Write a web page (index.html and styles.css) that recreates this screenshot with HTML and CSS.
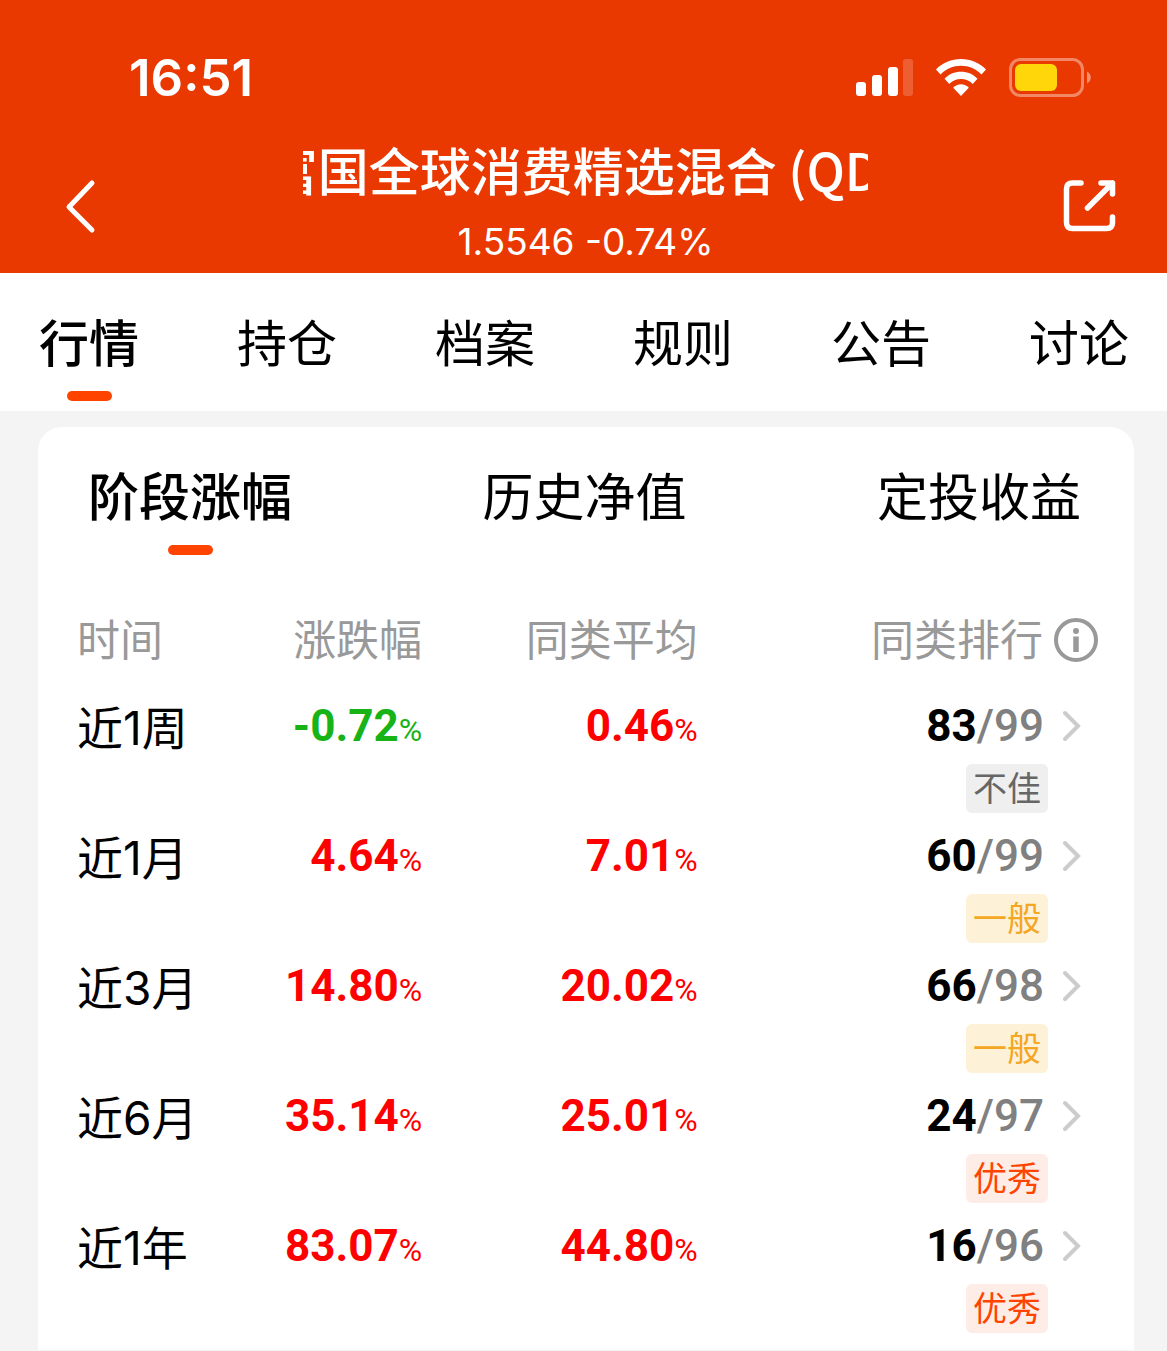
FILE: index.html
```html
<!DOCTYPE html>
<html lang="zh-CN">
<head>
<meta charset="utf-8">
<meta name="viewport" content="width=device-width, initial-scale=1">
<title>富国全球消费精选混合(QDII)</title>
<link rel="stylesheet" href="styles.css">
</head>
<body>
<header class="top">
  <div class="status">
    <time class="clock">16:51</time>
    <div class="status-icons">
      <svg width="58" height="38" viewBox="0 0 58 38" fill="#fff" aria-hidden="true">
        <rect x="1" y="23" width="10" height="14" rx="3"/>
        <rect x="17" y="16" width="10" height="21" rx="3"/>
        <rect x="33" y="8" width="10" height="29" rx="3"/>
        <rect x="48" y="0" width="10" height="37" rx="3" opacity=".2"/>
      </svg>
      <svg width="50" height="38" viewBox="0 0 50 38" fill="#fff" aria-hidden="true">
        <path d="M25 0C34.500 0 43.500 3.800 50 10.500L45.500 15.500C40 10 33 6.800 25 6.800S10 10 4.500 15.500L0 10.500C6.500 3.800 15.500 0 25 0Z"/>
        <path d="M25 12.800C31.500 12.800 37.300 15.400 41.500 19.800L36.700 25C33.600 21.800 29.500 20 25 20S16.400 21.800 13.300 25L8.500 19.800C12.700 15.400 18.500 12.800 25 12.800Z"/>
        <path d="M25 25.300C28 25.300 30.800 26.600 32.800 28.800L25 37L17.200 28.800C19.200 26.600 22 25.300 25 25.300Z"/>
      </svg>
      <svg width="82" height="40" viewBox="0 0 82 40" aria-hidden="true">
        <rect x="1.500" y="1.500" width="72" height="36" rx="10" fill="none" stroke="#fff" stroke-opacity=".4" stroke-width="3"/>
        <rect x="6" y="6" width="42" height="27" rx="6" fill="#ffd60a"/>
        <path d="M78 13.500C83 16 83 23 78 25.500Z" fill="#fff" opacity=".45"/>
      </svg>
    </div>
  </div>
  <div class="nav">
    <button class="icon-btn back" type="button" aria-label="返回">
      <svg width="50" height="56" viewBox="0 0 50 56" fill="none" stroke="#fff" stroke-width="5" stroke-linecap="round" stroke-linejoin="round"><path d="M40 4L17 28L40 51"/></svg>
    </button>
    <div class="fund">
      <h1 class="fund-name">富国全球消费精选混合 (QDII)</h1>
      <p class="fund-value">1.5546 -0.74%</p>
    </div>
    <button class="icon-btn share" type="button" aria-label="分享">
      <svg width="56" height="56" viewBox="0 0 56 56" fill="none" stroke="#fff" stroke-width="5.500" stroke-linecap="round" stroke-linejoin="round"><path d="M18 4H9.500Q3.500 4 3.500 10V43.500Q3.500 49.500 9.500 49.500H43.500Q49.500 49.500 49.500 43.500V38M38 4H49.500V15M49.500 4L24.500 29"/></svg>
    </button>
  </div>
</header>

<nav class="tabs">
  <a class="tab active" href="#quote">行情</a>
  <a class="tab" href="#holdings">持仓</a>
  <a class="tab" href="#profile">档案</a>
  <a class="tab" href="#rules">规则</a>
  <a class="tab" href="#notices">公告</a>
  <a class="tab" href="#discuss">讨论</a>
</nav>

<main class="page" id="quote">
  <section class="card">
    <div class="subtabs">
      <button class="tab active" type="button">阶段涨幅</button>
      <button class="tab" type="button">历史净值</button>
      <button class="tab" type="button">定投收益</button>
    </div>
    <table class="returns">
      <thead>
        <tr>
          <th class="period" scope="col">时间</th>
          <th class="change" scope="col">涨跌幅</th>
          <th class="average" scope="col">同类平均</th>
          <th class="rank" scope="col"><span class="rank-line">同类排行<button class="icon-btn" type="button" aria-label="排行说明"><svg width="44" height="44" viewBox="0 0 44 44" fill="none" stroke="#999"><circle cx="22" cy="22" r="20" stroke-width="4"/><path d="M22 18.500V34" stroke-width="5.500"/><circle cx="22" cy="13" r="3" fill="#999" stroke="none"/></svg></button></span></th>
        </tr>
      </thead>
      <tbody>
        <tr>
          <th class="period" scope="row">近1周</th>
          <td class="num down">-0.72<span class="pct">%</span></td>
          <td class="num up">0.46<span class="pct">%</span></td>
          <td class="rank"><a class="rank-line num" href="#rank-1w"><span>83<span class="total">/99</span></span><svg class="chev" viewBox="0 0 20 32"><path d="M3 3L16 16L3 29"/></svg></a><span class="badge poor">不佳</span></td>
        </tr>
        <tr>
          <th class="period" scope="row">近1月</th>
          <td class="num up">4.64<span class="pct">%</span></td>
          <td class="num up">7.01<span class="pct">%</span></td>
          <td class="rank"><a class="rank-line num" href="#rank-1m"><span>60<span class="total">/99</span></span><svg class="chev" viewBox="0 0 20 32"><path d="M3 3L16 16L3 29"/></svg></a><span class="badge fair">一般</span></td>
        </tr>
        <tr>
          <th class="period" scope="row">近3月</th>
          <td class="num up">14.80<span class="pct">%</span></td>
          <td class="num up">20.02<span class="pct">%</span></td>
          <td class="rank"><a class="rank-line num" href="#rank-3m"><span>66<span class="total">/98</span></span><svg class="chev" viewBox="0 0 20 32"><path d="M3 3L16 16L3 29"/></svg></a><span class="badge fair">一般</span></td>
        </tr>
        <tr>
          <th class="period" scope="row">近6月</th>
          <td class="num up">35.14<span class="pct">%</span></td>
          <td class="num up">25.01<span class="pct">%</span></td>
          <td class="rank"><a class="rank-line num" href="#rank-6m"><span>24<span class="total">/97</span></span><svg class="chev" viewBox="0 0 20 32"><path d="M3 3L16 16L3 29"/></svg></a><span class="badge good">优秀</span></td>
        </tr>
        <tr>
          <th class="period" scope="row">近1年</th>
          <td class="num up">83.07<span class="pct">%</span></td>
          <td class="num up">44.80<span class="pct">%</span></td>
          <td class="rank"><a class="rank-line num" href="#rank-1y"><span>16<span class="total">/96</span></span><svg class="chev" viewBox="0 0 20 32"><path d="M3 3L16 16L3 29"/></svg></a><span class="badge good">优秀</span></td>
        </tr>
      </tbody>
    </table>
  </section>
</main>
</body>
</html>
```
FILE: styles.css
```css
* { box-sizing: border-box; }

body {
  margin: 0;
  background: #f4f4f4;
  color: #000;
  font-family: "Inter", "Noto Sans CJK SC", sans-serif;
}

h1, p { margin: 0; }
a { color: inherit; text-decoration: none; }
svg { display: block; flex: none; }

button {
  margin: 0;
  padding: 0;
  border: 0;
  background: none;
  color: inherit;
  font: inherit;
}

.icon-btn { display: flex; }

/* Header */
.top {
  background: #e93800;
  color: #fff;
  padding-bottom: 2px;
}

.status {
  display: flex;
  justify-content: space-between;
  align-items: center;
  padding: 48px 76px 0 129px;
}

.clock {
  font-size: 51px;
  font-weight: 600;
  line-height: 60px;
}

.status-icons {
  display: flex;
  align-items: center;
  gap: 23px;
}

.nav {
  display: grid;
  grid-template-columns: 1fr 53% 1fr;
  align-items: center;
  padding: 27px 48px 0 52px;
}

.share { justify-self: end; }

.back, .share { padding-top: 8px; }

.fund { text-align: center; }

.fund-name {
  overflow: hidden;
  white-space: nowrap;
  text-align: left;
  text-indent: -36px;
  font-family: "Noto Sans CJK SC", sans-serif;
  font-size: 51px;
  font-weight: 500;
  line-height: 68px;
}

.fund-value {
  margin-top: 10px;
  font-size: 37px;
  line-height: 58px;
}

/* Tabs */
.tabs, .subtabs {
  display: flex;
  justify-content: space-between;
}

.tabs {
  background: #fff;
  padding: 30px 38px 10px 39px;
}

.subtabs { padding: 30px 17px 0 11px; }

.tab {
  display: flex;
  flex-direction: column;
  align-items: center;
  font-family: "Noto Sans CJK SC", sans-serif;
  font-size: 51px;
  line-height: 74px;
}

.tabs .tab { font-size: 50px; }

.tab::after {
  content: "";
  width: 45px;
  height: 10px;
  margin-top: 14px;
  border-radius: 5px;
}

.active { font-weight: 500; }
.active::after { background: #ff4400; }

/* Card */
.page { padding: 16px 33px 0 38px; }

.card {
  background: #fff;
  border-radius: 24px 24px 0 0;
  padding: 0 36px 17px 39px;
}

.returns {
  width: 100%;
  margin-top: 50px;
  border-collapse: collapse;
  table-layout: fixed;
  text-align: right;
}

.returns th, .returns td {
  padding: 0 2px 0 0;
  vertical-align: top;
  text-align: right;
  font-weight: 400;
  font-size: 43px;
  line-height: 70px;
}

.returns .period { text-align: left; }
.returns thead th { padding-bottom: 8px; color: #999; }
th.period { width: 17%; }
th.change { width: 17%; }
th.average { width: 27%; }

.returns tbody td { padding-top: 8px; }
.returns tbody th { padding-top: 10px; font-size: 46px; }

.returns .rank { padding-right: 0; }

.rank-line {
  display: flex;
  justify-content: flex-end;
  align-items: center;
  gap: 11px;
}

.returns .num {
  font-family: "Roboto", sans-serif;
  font-size: 44px;
  font-weight: 700;
}

.rank-line.num {
  gap: 18px;
  padding-right: 16px;
  line-height: 70px;
}

.returns .pct {
  font-size: 32px;
  font-weight: 400;
}

.total { color: #808080; font-weight: 500; }
.up { color: #ff0000; }
.down { color: #17b317; }

.chev {
  width: 20px;
  height: 32px;
  fill: none;
  stroke: #ccc;
  stroke-width: 4;
  stroke-linecap: round;
}

.badge {
  display: block;
  width: fit-content;
  margin: 3px 50px 0 auto;
  padding: 0 7px;
  border-radius: 6px;
  font-size: 34px;
  line-height: 49px;
}

.poor { background: #efefef; color: #666; }
.fair { background: #fdf2d8; color: #f5a623; }
.good { background: #feece7; color: #ff4400; }
```
